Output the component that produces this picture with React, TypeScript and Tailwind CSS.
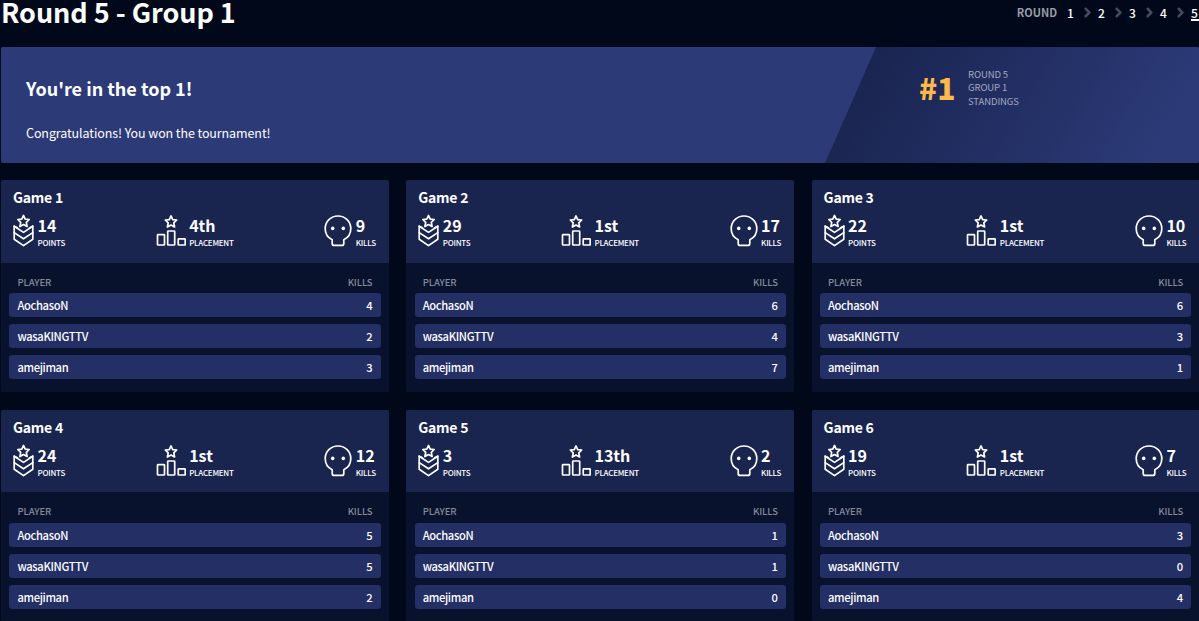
import { ChevronRight } from 'lucide-react'

const games = [
  { points: 14, placement: '4th', kills: 9, players: [4, 2, 3] },
  { points: 29, placement: '1st', kills: 17, players: [6, 4, 7] },
  { points: 22, placement: '1st', kills: 10, players: [6, 3, 1] },
  { points: 24, placement: '1st', kills: 12, players: [5, 5, 2] },
  { points: 3, placement: '13th', kills: 2, players: [1, 1, 0] },
  { points: 19, placement: '1st', kills: 7, players: [3, 0, 4] },
]

const names = ['AochasoN', 'wasaKINGTTV', 'amejiman']

const starPath = 'M0 -5.8 L1.7 -2.1 L5.7 -1.7 L2.8 1.2 L3.6 5.3 L0 3.3 L-3.6 5.3 L-2.8 1.2 L-5.7 -1.7 L-1.7 -2.1 Z'

function PointsIcon() {
  return (
    <svg width="21" height="33" viewBox="0 0 21 33" fill="none" stroke="white" strokeWidth="1.7" strokeLinejoin="round" strokeLinecap="round">
      <path d={starPath} transform="translate(10.5 7.2)" />
      <path d="M4.5 13.8 L1.2 12.2 V25.2 L10.5 31.6 L19.8 25.2 V12.2 L16.5 13.8" />
      <path d="M1.2 12.2 L10.5 18.4 L19.8 12.2" />
      <path d="M1.2 18.6 L10.5 24.8 L19.8 18.6" />
    </svg>
  )
}

function PlacementIcon() {
  return (
    <svg width="30" height="33" viewBox="0 0 30 33" fill="none" stroke="white" strokeWidth="1.7" strokeLinejoin="round">
      <path d={starPath} transform="translate(15 7.7)" />
      <rect x="1.5" y="20.6" width="7" height="10.4" rx="0.6" />
      <rect x="11.7" y="17" width="7" height="14" rx="0.6" />
      <rect x="22.2" y="24.8" width="7" height="6.2" rx="0.6" />
    </svg>
  )
}

function KillsIcon() {
  return (
    <svg width="28" height="33" viewBox="0 0 28 33" fill="none" stroke="white" strokeWidth="1.7" strokeLinejoin="round">
      <path d="M8.2 25.8 C3.6 23.7 1.2 19.2 1.2 14.6 C1.2 7.4 6.8 2 14 2 C21.2 2 26.8 7.4 26.8 14.6 C26.8 19.2 24.4 23.7 19.8 25.8 V29.4 Q19.8 31.4 17.8 31.4 H10.2 Q8.2 31.4 8.2 29.4 Z" />
      <circle cx="8.7" cy="14.4" r="1.8" fill="white" stroke="none" />
      <circle cx="19.3" cy="14.4" r="1.8" fill="white" stroke="none" />
    </svg>
  )
}

function Stat({ icon, value, label }: { icon: React.ReactNode; value: string | number; label: string }) {
  return (
    <div className="flex gap-[3.5px]">
      {icon}
      <div className="pt-[2px]">
        <div className="text-[16px] leading-[18px] font-bold">{value}</div>
        <div className="pt-px text-[8px] leading-[15px] font-medium tracking-[-0.25px]">{label}</div>
      </div>
    </div>
  )
}

function GameCard({ index, game }: { index: number; game: (typeof games)[number] }) {
  return (
    <div className="h-[212px] rounded-[2px] overflow-hidden bg-[#08122d]">
      <div className="h-[82.6px] bg-[#19244f] pl-3 pr-[13px] pt-2">
        <h3 className="text-[14px] leading-[18px] font-bold tracking-[-0.25px]">Game {index + 1}</h3>
        <div className="flex justify-between pt-2">
          <Stat icon={<PointsIcon />} value={game.points} label="POINTS" />
          <Stat icon={<PlacementIcon />} value={game.placement} label="PLACEMENT" />
          <Stat icon={<KillsIcon />} value={game.kills} label="KILLS" />
        </div>
      </div>
      <div className="px-[8.4px] pt-[11px]">
        <div className="flex justify-between px-2 text-[9.5px] leading-4 font-medium text-[#85899a] tracking-[-0.1px]">
          <span>PLAYER</span>
          <span>KILLS</span>
        </div>
        <div className="flex flex-col gap-[7px] pt-[3.4px]">
          {names.map((name, i) => (
            <div key={name} className="flex justify-between h-6 px-2 rounded-[3px] bg-[#232f65] text-[11.2px] leading-6 font-medium">
              <span className="tracking-[-0.35px]">{name}</span>
              <span>{game.players[i]}</span>
            </div>
          ))}
        </div>
      </div>
    </div>
  )
}

export default function App() {
  return (
    <div className="w-[1199px] h-[621px] overflow-hidden bg-[#000819] text-white font-['Noto_Sans_CJK_JP','Noto_Sans',sans-serif]">
      <div className="flex justify-between h-[47px] pl-px">
        <h1 className="text-[27px] leading-6 font-bold tracking-[-0.05px]">Round 5 - Group 1</h1>
        <div className="flex items-start text-[12px] leading-[25px] font-medium">
          <span className="mr-[10px] text-[11px] font-bold text-[#9a9ca6]">ROUND</span>
          {[1, 2, 3, 4].map((n) => (
            <div key={n} className="flex items-center w-[31px] h-[25px]">
              <span>{n}</span>
              <ChevronRight size={15} strokeWidth={4} className="ml-[6px] text-[#464b59]" />
            </div>
          ))}
          <span className="w-[8px] h-[21px] border-b-2 border-white">5</span>
        </div>
      </div>

      <div className="flex justify-between ml-px h-[116px] rounded-[2px] overflow-hidden bg-[#2c3a78]">
        <div className="pl-[25px] pt-[28px]">
          <h2 className="text-[18px] leading-[26px] font-bold">You're in the top 1!</h2>
          <p className="pt-[22px] text-[12.5px] leading-5 tracking-[-0.1px]">Congratulations! You won the tournament!</p>
        </div>
        <div className="flex w-[374px] pl-[94px] bg-[linear-gradient(120deg,#19244f_10%,#2c3a78_90%)] [clip-path:polygon(51px_0,100%_0,100%_100%,0_100%)]">
          <span className="w-[49px] pt-[21px] text-[30px] leading-[38px] font-black text-[#ffb84a]">#1</span>
          <div className="pt-[21px] text-[9.5px] leading-[13.4px] text-[#a3a8bf] tracking-[-0.1px]">
            <div>ROUND 5</div>
            <div>GROUP 1</div>
            <div>STANDINGS</div>
          </div>
        </div>
      </div>

      <div className="grid grid-cols-3 w-[1198.5px] ml-px pt-[17.2px] gap-x-[17.4px] gap-y-[17.5px]">
        {games.map((game, i) => (
          <GameCard key={i} index={i} game={game} />
        ))}
      </div>
    </div>
  )
}
